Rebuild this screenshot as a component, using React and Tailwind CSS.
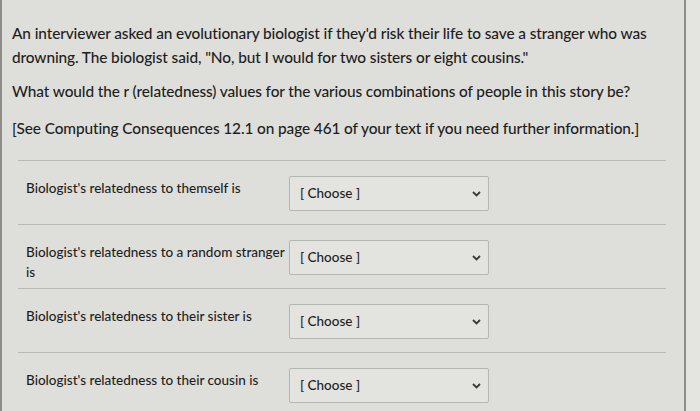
import React from "react";

const rows = [
  { label: "Biologist's relatedness to themself is" },
  { label: "Biologist's relatedness to a random stranger is" },
  { label: "Biologist's relatedness to their sister is" },
  { label: "Biologist's relatedness to their cousin is" },
];

function Chevron() {
  return (
    <svg width="9" height="6" viewBox="0 0 9 6" className="text-[#3a3a3a]">
      <path d="M1 1 L4.5 4.5 L8 1" fill="none" stroke="currentColor" strokeWidth="1.8" />
    </svg>
  );
}

export default function App() {
  return (
    <div className="w-[700px] h-[411px] overflow-hidden bg-[#e2e3df] font-['Lato',sans-serif] font-medium text-[#1e1e1e] flex">
      <div className="w-[686px] h-full border-l-[2px] border-r-[2px] border-[#8d8e8a] bg-[#dedfdb] pl-[10px] pr-[18px]">
        <div className="pt-[21px] text-[15.4px] leading-[24px] tracking-[-0.1px]">
          <p>
            An interviewer asked an evolutionary biologist if they'd risk their life to save a stranger who was drowning. The biologist said, "No, but I would for two sisters or eight cousins."
          </p>
          <p className="mt-[10px]">What would the r (relatedness) values for the various combinations of people in this story be?</p>
          <p className="mt-[13px]">[See Computing Consequences 12.1 on page 461 of your text if you need further information.]</p>
        </div>
        <div className="mt-[20px] ml-[6px] border-t border-[#b9bab6]">
          {rows.map((r, i) => (
            <div key={i} className="flex items-start h-[64px] border-b border-[#b9bab6] pt-[15px] pl-[8px]">
              <div className="w-[263px] text-[13.5px] leading-[20px] pr-[2px] pt-[2px]">{r.label}</div>
              <div className="w-[200px] h-[35px] border border-[#b6b7b3] bg-[#e3e4e0] rounded-[2px] flex items-center justify-between pl-[10px] pr-[7px]">
                <span className="text-[13.5px]">[ Choose ]</span>
                <Chevron />
              </div>
            </div>
          ))}
        </div>
      </div>
      <div className="flex-1 bg-[#e4e5e1]" />
    </div>
  );
}
